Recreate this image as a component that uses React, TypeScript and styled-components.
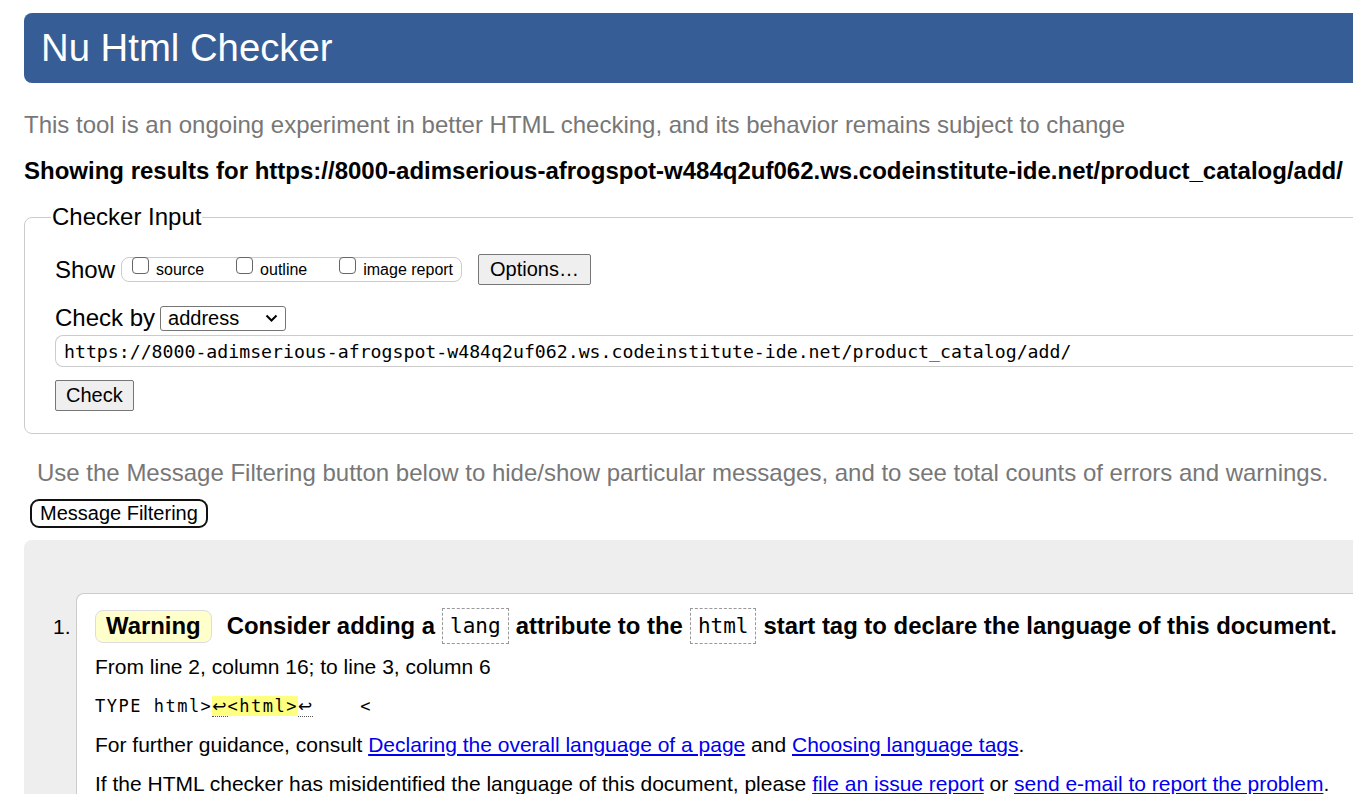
import styled, { createGlobalStyle } from "styled-components";

const Global = createGlobalStyle`
  html, body {
    margin: 0;
    padding: 0;
    background: #fff;
    overflow: hidden;
  }
  body {
    font-family: "Liberation Sans", Arial, sans-serif;
    color: #000;
  }
`

const Page = styled.div`
  width: 1440px;
  padding: 13px 0 0 24px;
`
const Header = styled.header`
  background: #365d95;
  height: 70px;
  border-radius: 8px 0 0 8px;
  display: flex;
  align-items: center;
  padding-left: 17px;
`
const Title = styled.h1`
  margin: 0;
  color: #fff;
  font-weight: 400;
  font-size: 38.3px;
`
const Intro = styled.p`
  margin: 29px 0 0;
  color: #777;
  font-size: 24px;
  line-height: 26px;
  white-space: nowrap;
`
const Results = styled.p`
  margin: 20px 0 0;
  font-weight: 700;
  font-size: 24px;
  line-height: 26px;
  white-space: nowrap;
`
const Fieldset = styled.fieldset`
  margin: 20px 0 0;
  border: 1px solid #ccc;
  border-radius: 8px;
  padding: 12px 0 22px 30px;
`
const Legend = styled.legend`
  font-size: 24px;
  line-height: 26px;
  padding: 0 1px;
  margin-left: -4px;
`
const Row = styled.div`
  display: flex;
  align-items: center;
  gap: ${p => p.$gap ?? 5}px;
  margin-top: ${p => p.$top ?? 0}px;
`
const Label = styled.span`
  font-size: 24px;
  line-height: 26px;
`
const Group = styled.div`
  display: flex;
  align-items: flex-end;
  gap: 32px;
  border: 1px solid #ccc;
  border-radius: 8px;
  height: 25px;
  box-sizing: border-box;
  padding: 0 8px 3px 10px;
  margin: 0 11px 0 1px;
`
const Check = styled.label`
  display: flex;
  align-items: flex-end;
  gap: 7px;
  font-size: 16px;
  line-height: 16px;
`
const Box = styled.span`
  width: 17px;
  height: 17px;
  border: 1px solid #666;
  border-radius: 4px;
  margin-bottom: 4px;
  box-sizing: border-box;
  background: #fff;
`
const Button = styled.button`
  font-family: "Liberation Sans", Arial, sans-serif;
  font-size: 20px;
  color: #000;
  background: #efefef;
  border: 1px solid #767676;
  border-radius: 2px;
  height: 31px;
  padding: 0 ${p => p.$px ?? 11}px;
`
const Select = styled.div`
  width: 126px;
  height: 25px;
  box-sizing: border-box;
  border: 1px solid #767676;
  border-radius: 3px;
  display: flex;
  align-items: center;
  justify-content: space-between;
  padding: 0 7px 0 7px;
  font-size: 20px;
`
const UrlInput = styled.div`
  margin-top: 4px;
  height: 32px;
  box-sizing: border-box;
  border: 1px solid #ccc;
  border-right: none;
  border-radius: 8px 0 0 8px;
  display: flex;
  align-items: center;
  padding-left: 8px;
  font-family: "DejaVu Sans Mono", monospace;
  font-size: 18.2px;
  white-space: nowrap;
`
const Filter = styled.p`
  margin: 26px 0 0 13px;
  color: #777;
  font-size: 24px;
  line-height: 26px;
  white-space: nowrap;
`
const FilterButton = styled.button`
  display: block;
  margin: 13px 0 0 6px;
  font-family: "Liberation Sans", Arial, sans-serif;
  font-size: 20px;
  color: #000;
  background: #fff;
  border: 2px solid #111;
  border-radius: 9px;
  height: 29px;
  padding: 0 8px;
`
const Messages = styled.div`
  margin-top: 12px;
  background: #eee;
  border-radius: 8px 0 0 0;
  padding: 53px 0 0 52px;
`
const Item = styled.div`
  display: flex;
  background: #fff;
  border: 1px solid #ccc;
  border-right: none;
  border-bottom: none;
  border-radius: 8px 0 0 0;
  padding: 14px 0 0 18px;
  position: relative;
`
const Num = styled.span`
  position: absolute;
  left: -24px;
  top: 21px;
  font-size: 21px;
`
const Body = styled.div`
  display: flex;
  flex-direction: column;
`
const Heading = styled.div`
  display: flex;
  align-items: center;
  font-weight: 700;
  font-size: 23.9px;
  white-space: pre;
`
const Badge = styled.span`
  background: #ffffcc;
  border: 1px solid #ddd;
  border-radius: 8px;
  padding: 0 10px;
  height: 31px;
  display: flex;
  align-items: center;
  margin-right: 15px;
`
const Code = styled.code`
  font-family: "DejaVu Sans Mono", monospace;
  font-weight: 400;
  font-size: 21px;
  border: 1px dashed #999;
  padding: 0 7px;
  height: 36px;
  box-sizing: border-box;
  display: flex;
  align-items: center;
  margin: 0 7px;
`
const Line = styled.p`
  margin: ${p => p.$top ?? 13}px 0 0;
  font-size: 21px;
  line-height: 26px;
  white-space: nowrap;
`
const Extract = styled.p`
  margin: 13px 0 0;
  font-family: "DejaVu Sans Mono", monospace;
  font-size: 17px;
  letter-spacing: 1.5px;
  line-height: 26px;
  white-space: pre;
`
const Mark = styled.mark`
  background: #ffff80;
  color: #000;
`
const Lf = styled.span`
  font-family: "DejaVu Sans", sans-serif;
  font-size: 17px;
  letter-spacing: 1px;
  border-bottom: 1px dotted #555;
`
const Link = styled.a`
  color: #0000ee;
  text-decoration: underline;
`

export default function App() {
  return <Page>
    <Global />
    <Header>
      <Title>Nu Html Checker</Title>
    </Header>
    <Intro>This tool is an ongoing experiment in better HTML checking, and its behavior remains subject to change</Intro>
    <Results>Showing results for https://8000-adimserious-afrogspot-w484q2uf062.ws.codeinstitute-ide.net/product_catalog/add/</Results>
    <Fieldset>
      <Legend>Checker Input</Legend>
      <Row $top={12}>
        <Label>Show</Label>
        <Group>
          <Check><Box />source</Check>
          <Check><Box />outline</Check>
          <Check><Box />image report</Check>
        </Group>
        <Button>Options…</Button>
      </Row>
      <Row $top={20}>
        <Label>Check by</Label>
        <Select>
          address
          <svg width="13" height="8" viewBox="0 0 13 8"><path d="M1.5 1.5 6.5 6.5 11.5 1.5" fill="none" stroke="#000" strokeWidth="2" /></svg>
        </Select>
      </Row>
      <UrlInput>https://8000-adimserious-afrogspot-w484q2uf062.ws.codeinstitute-ide.net/product_catalog/add/</UrlInput>
      <Row $top={13}>
        <Button $px={10}>Check</Button>
      </Row>
    </Fieldset>
    <Filter>Use the Message Filtering button below to hide/show particular messages, and to see total counts of errors and warnings.</Filter>
    <FilterButton>Message Filtering</FilterButton>
    <Messages>
      <Item>
        <Num>1.</Num>
        <Body>
          <Heading>
            <Badge>Warning</Badge>
            Consider adding a<Code>lang</Code>attribute to the<Code>html</Code>start tag to declare the language of this document.
          </Heading>
          <Line $top={10}>From line 2, column 16; to line 3, column 6</Line>
          <Extract>TYPE html&gt;<Mark><Lf>↩</Lf>&lt;html&gt;</Mark><Lf>↩</Lf>    &lt;</Extract>
          <Line>For further guidance, consult <Link href="#">Declaring the overall language of a page</Link> and <Link href="#">Choosing language tags</Link>.</Line>
          <Line>If the HTML checker has misidentified the language of this document, please <Link href="#">file an issue report</Link> or <Link href="#">send e-mail to report the problem</Link>.</Line>
        </Body>
      </Item>
    </Messages>
  </Page>
}
